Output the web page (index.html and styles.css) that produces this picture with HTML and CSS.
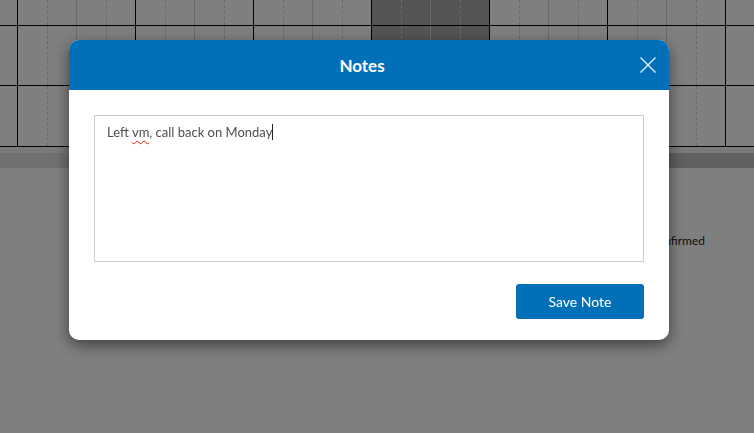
FILE: index.html
```html
<!DOCTYPE html>
<html lang="en">
<head>
<meta charset="utf-8">
<title>Notes</title>
<link rel="stylesheet" href="styles.css">
</head>
<body>
<div class="page">
  <div class="calendar">
    <div class="cal-row row-a">
      <div class="gutter"></div>
      <div class="cell"><span class="slot"></span><span class="slot solid"></span><span class="slot"></span><span class="slot last"></span></div>
      <div class="cell"><span class="slot"></span><span class="slot solid"></span><span class="slot"></span><span class="slot last"></span></div>
      <div class="cell"><span class="slot"></span><span class="slot solid"></span><span class="slot"></span><span class="slot last"></span></div>
      <div class="cell today"><span class="slot"></span><span class="slot solid"></span><span class="slot"></span><span class="slot last"></span></div>
      <div class="cell"><span class="slot"></span><span class="slot solid"></span><span class="slot"></span><span class="slot last"></span></div>
      <div class="cell"><span class="slot"></span><span class="slot solid"></span><span class="slot"></span><span class="slot last"></span></div>
      <div class="cell tail"></div>
    </div>
    <div class="cal-row row-b">
      <div class="gutter"></div>
      <div class="cell"><span class="slot"></span><span class="slot solid"></span><span class="slot"></span><span class="slot last"></span></div>
      <div class="cell"><span class="slot"></span><span class="slot solid"></span><span class="slot"></span><span class="slot last"></span></div>
      <div class="cell"><span class="slot"></span><span class="slot solid"></span><span class="slot"></span><span class="slot last"></span></div>
      <div class="cell today"><span class="slot"></span><span class="slot solid"></span><span class="slot"></span><span class="slot last"></span></div>
      <div class="cell"><span class="slot"></span><span class="slot solid"></span><span class="slot"></span><span class="slot last"></span></div>
      <div class="cell"><span class="slot"></span><span class="slot solid"></span><span class="slot"></span><span class="slot last"></span></div>
      <div class="cell tail"></div>
    </div>
    <div class="cal-row row-c">
      <div class="gutter"></div>
      <div class="cell"><span class="slot"></span><span class="slot solid"></span><span class="slot"></span><span class="slot last"></span></div>
      <div class="cell"><span class="slot"></span><span class="slot solid"></span><span class="slot"></span><span class="slot last"></span></div>
      <div class="cell"><span class="slot"></span><span class="slot solid"></span><span class="slot"></span><span class="slot last"></span></div>
      <div class="cell today"><span class="slot"></span><span class="slot solid"></span><span class="slot"></span><span class="slot last"></span></div>
      <div class="cell"><span class="slot"></span><span class="slot solid"></span><span class="slot"></span><span class="slot last"></span></div>
      <div class="cell"><span class="slot"></span><span class="slot solid"></span><span class="slot"></span><span class="slot last"></span></div>
      <div class="cell tail"></div>
    </div>
  </div>
  <div class="band"></div>
  <div class="hscroll"><div class="hscroll-thumb"></div></div>
  <div class="status-row"><span class="status">Confirmed</span></div>
</div>

<div class="backdrop">
  <div class="modal" role="dialog" aria-labelledby="notes-title">
    <div class="modal-header">
      <h4 class="modal-title" id="notes-title">Notes</h4>
      <button class="close-btn" aria-label="Close">
        <svg width="16" height="16" viewBox="0 0 16 16"><path d="M0.5 0.5 L15.5 15.5 M15.5 0.5 L0.5 15.5" stroke="#e8f2fa" stroke-width="1.3" fill="none"/></svg>
      </button>
    </div>
    <div class="modal-body">
      <div class="note-input">Left <span class="misspelled">vm</span>, call back on Monday<span class="caret"></span></div>
      <div class="actions">
        <button class="btn-primary">Save Note</button>
      </div>
    </div>
  </div>
</div>
</body>
</html>
```
FILE: styles.css
```css
* { box-sizing: border-box; }

html, body {
  margin: 0;
  padding: 0;
  width: 754px;
  height: 433px;
  overflow: hidden;
  background: #ffffff;
  font-family: Lato, "Open Sans", Arial, sans-serif;
}

.page {
  width: 754px;
  height: 433px;
  background: #ffffff;
}

.calendar {
  display: flex;
  flex-direction: column;
}

.cal-row {
  display: flex;
  border-bottom: 1px solid #000;
}

.row-a { height: 26px; }
.row-b { height: 60px; }
.row-c { height: 61px; }

.gutter {
  width: 17px;
  flex: none;
}

.cell {
  width: 118px;
  flex: none;
  display: flex;
  border-left: 1px solid #000;
}

.cell.today { background: #a8a8a8; }

.cell.tail {
  flex: 1;
  width: auto;
}

.slot {
  flex: 1;
  border-right: 1px dashed #d4d4d4;
}

.slot.solid { border-right: 1px solid #d6d6d6; }
.slot.last { border-right: none; }

.band {
  height: 6px;
  background: #f4f4f4;
}

.hscroll {
  height: 15px;
  background: #e0e0e0;
  display: flex;
  justify-content: flex-end;
  padding: 0 0 0 300px;
}

.hscroll-thumb {
  flex: 1;
  background: #c0c0c0;
}

.status-row {
  display: flex;
  justify-content: flex-end;
  padding: 65px 49px 0 0;
}

.status {
  font-size: 12px;
  line-height: 15px;
  color: #222;
}

/* Modal */
.backdrop {
  position: fixed;
  inset: 0;
  background: rgba(0, 0, 0, 0.5);
  display: flex;
  justify-content: center;
  align-items: flex-start;
  padding: 40px 16px 0 0;
}

.modal {
  width: 600px;
  background: #fff;
  border-radius: 10px;
  box-shadow: 0 5px 15px rgba(0, 0, 0, 0.5);
  overflow: hidden;
}

.modal-header {
  height: 50px;
  background: #0270b8;
  display: flex;
  align-items: center;
  padding: 0 13px 0 15px;
}

.modal-title {
  flex: 1;
  margin: 0;
  text-align: center;
  color: #fff;
  font-size: 17px;
  font-weight: 700;
  line-height: 20px;
  padding-top: 2px;
}

.close-btn {
  width: 16px;
  height: 16px;
  padding: 0;
  border: 0;
  background: transparent;
  display: flex;
}

.modal-body {
  padding: 25px 25px 21px;
}

.note-input {
  height: 147px;
  border: 1px solid #cccccc;
  padding: 6px 12px;
  font-size: 13px;
  line-height: 20px;
  color: #4f4f4f;
}

.misspelled {
  text-decoration: underline wavy #e0201a;
  text-decoration-thickness: 1px;
  text-underline-offset: 3px;
}

.caret {
  display: inline-block;
  width: 1px;
  height: 16px;
  background: #222;
  vertical-align: -3px;
}

.actions {
  display: flex;
  justify-content: flex-end;
  margin-top: 22px;
}

.btn-primary {
  width: 128px;
  height: 35px;
  border: 0;
  border-radius: 3px;
  background: #0270b8;
  color: #fff;
  font-family: Lato, "Open Sans", Arial, sans-serif;
  font-size: 14px;
  font-weight: 400;
}
```
